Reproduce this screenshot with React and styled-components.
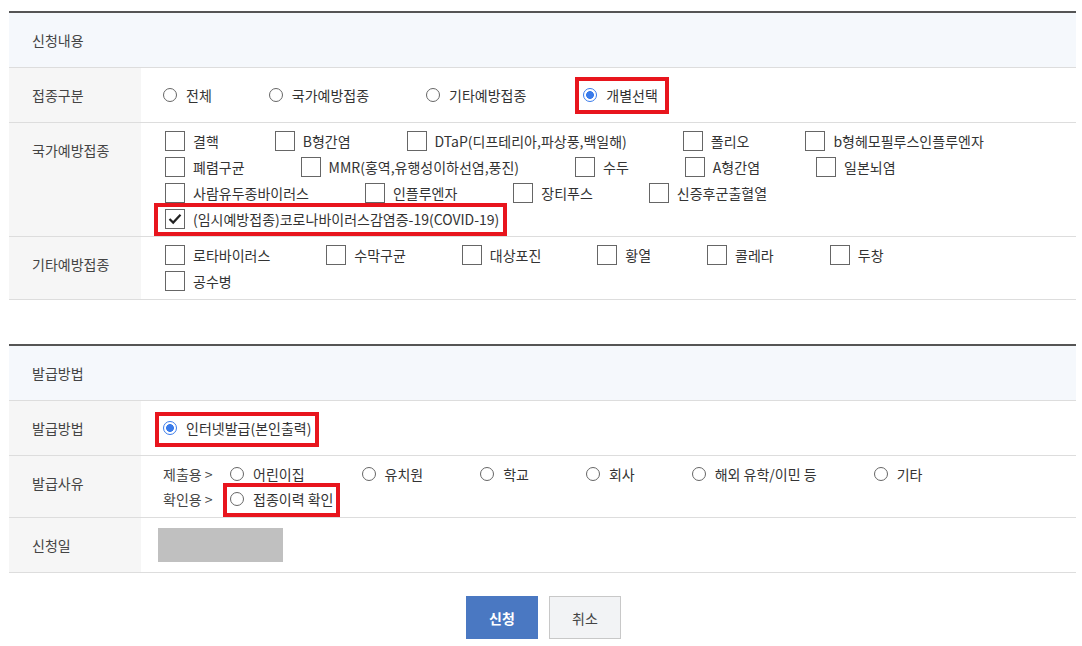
import React from "react";
import styled, { createGlobalStyle } from "styled-components";

const GlobalStyle = createGlobalStyle`
  body {
    margin: 0;
    background: #ffffff;
    font-family: "Noto Sans CJK KR", "Noto Sans", sans-serif;
    font-size: 14px;
    color: #333333;
  }
`;

const nationalRows = [
  ["결핵", "B형간염", "DTaP(디프테리아,파상풍,백일해)", "폴리오", "b형헤모필루스인플루엔자"],
  ["폐렴구균", "MMR(홍역,유행성이하선염,풍진)", "수두", "A형간염", "일본뇌염"],
  ["사람유두종바이러스", "인플루엔자", "장티푸스", "신증후군출혈열"],
];

const otherRows = [["로타바이러스", "수막구균", "대상포진", "황열", "콜레라", "두창"], ["공수병"]];

const reasons = ["어린이집", "유치원", "학교", "회사", "해외 유학/이민 등", "기타"];

const CheckBox = ({ checked, label }) => (
  <CheckItem>
    <Box>
      {checked && (
        <svg width="14" height="12" viewBox="0 0 14 12">
          <polyline points="1.5,6 5.2,9.6 12.5,1.8" fill="none" stroke="#222" strokeWidth="2.2" />
        </svg>
      )}
    </Box>
    <span>{label}</span>
  </CheckItem>
);

const Radio = ({ checked, label }) => (
  <RadioItem>
    <Circle $checked={checked} />
    <span>{label}</span>
  </RadioItem>
);

const App = () => {
  return (
    <>
      <GlobalStyle />
      <Page>
        <Section>
          <HeadRow>신청내용</HeadRow>
          <Row>
            <Label>접종구분</Label>
            <Cell>
              <Line>
                <Radio label="전체" />
                <Radio label="국가예방접종" />
                <Radio label="기타예방접종" />
                <Highlight $t={6} $r={11} $b={6} $l={8}>
                  <Radio checked label="개별선택" />
                </Highlight>
              </Line>
            </Cell>
          </Row>
          <Row>
            <Label>국가예방접종</Label>
            <Cell $pad="5px 0 4px 22px">
              {nationalRows.map((row, i) => (
                <Line key={i} $gap={54}>
                  {row.map((name) => (
                    <CheckBox key={name} label={name} />
                  ))}
                </Line>
              ))}
              <Line $gap={54}>
                <Highlight $t={3} $r={8} $b={4} $l={9}>
                  <CheckBox checked label="(임시예방접종)코로나바이러스감염증-19(COVID-19)" />
                </Highlight>
              </Line>
            </Cell>
          </Row>
          <Row>
            <Label>기타예방접종</Label>
            <Cell>
              {otherRows.map((row, i) => (
                <Line key={i} $gap={54}>
                  {row.map((name) => (
                    <CheckBox key={name} label={name} />
                  ))}
                </Line>
              ))}
            </Cell>
          </Row>
        </Section>

        <Section>
          <HeadRow>발급방법</HeadRow>
          <Row>
            <Label>발급방법</Label>
            <Cell>
              <Line>
                <Highlight $t={4} $r={8} $b={6} $l={8}>
                  <Radio checked label="인터넷발급(본인출력)" />
                </Highlight>
              </Line>
            </Cell>
          </Row>
          <Row>
            <Label>발급사유</Label>
            <Cell $pad="5px 0 6px 22px">
              <ReasonLine>
                <Prefix>제출용 &gt;</Prefix>
                <Line $h={25}>
                  {reasons.map((r) => (
                    <Radio key={r} label={r} />
                  ))}
                </Line>
              </ReasonLine>
              <ReasonLine>
                <Prefix>확인용 &gt;</Prefix>
                <Highlight $t={3} $r={7} $b={6} $l={7}>
                  <Radio label="접종이력 확인" />
                </Highlight>
              </ReasonLine>
            </Cell>
          </Row>
          <Row>
            <Label>신청일</Label>
            <Cell>
              <DateBox />
            </Cell>
          </Row>
        </Section>

        <Buttons>
          <Button $primary>신청</Button>
          <Button>취소</Button>
        </Buttons>
      </Page>
    </>
  );
};

export default App;

const Page = styled.div`
  padding: 11px 6px 0 9px;
`;

const Section = styled.div`
  border-top: 2px solid #555555;
  margin-bottom: 44px;

  & + & {
    margin-bottom: 23px;
  }
`;

const HeadRow = styled.div`
  height: 54px;
  display: flex;
  align-items: center;
  padding-left: 23px;
  background-color: #f5f8fc;
  border-bottom: 1px solid #dddddd;
  color: #444444;
`;

const Row = styled.div`
  display: flex;
  border-bottom: 1px solid #dddddd;
`;

const Label = styled.div`
  width: 132px;
  min-height: 54px;
  flex-shrink: 0;
  box-sizing: border-box;
  padding: 16px 0 0 23px;
  line-height: 22px;
  background-color: #f6f6f6;
  color: #444444;
`;

const Cell = styled.div`
  flex: 1;
  display: flex;
  flex-direction: column;
  justify-content: center;
  padding: ${(p) => p.$pad || "5px 0 5px 22px"};
`;

const Line = styled.div`
  display: flex;
  flex-wrap: wrap;
  align-items: center;
  column-gap: ${(p) => p.$gap || 57}px;
  min-height: ${(p) => p.$h || 26}px;
`;

const ReasonLine = styled.div`
  display: flex;
  align-items: center;
  min-height: 25px;
`;

const Prefix = styled.span`
  width: 67px;
  flex-shrink: 0;
  color: #444444;
  white-space: nowrap;
`;

const CheckItem = styled.label`
  display: inline-flex;
  align-items: center;
  gap: 8px;
  height: 26px;
  margin-left: 2px;
  line-height: 20px;
  white-space: nowrap;
`;

const Box = styled.span`
  width: 20px;
  height: 20px;
  box-sizing: border-box;
  border: 1px solid #666666;
  background: #ffffff;
  display: flex;
  align-items: center;
  justify-content: center;
`;

const RadioItem = styled.label`
  display: inline-flex;
  align-items: center;
  gap: 9px;
  height: 25px;
  line-height: 20px;
  white-space: nowrap;
`;

const Circle = styled.span`
  width: 14px;
  height: 14px;
  box-sizing: border-box;
  border-radius: 50%;
  border: 1px solid ${(p) => (p.$checked ? "#3a7bea" : "#666666")};
  background: ${(p) =>
    p.$checked ? "radial-gradient(circle, #3a7bea 0 3.6px, #ffffff 4.2px)" : "#ffffff"};
`;

const Highlight = styled.span`
  position: relative;
  display: inline-flex;

  &::after {
    content: "";
    position: absolute;
    top: -${(p) => p.$t}px;
    right: -${(p) => p.$r}px;
    bottom: -${(p) => p.$b}px;
    left: -${(p) => p.$l}px;
    border: 4px solid #e8151d;
    pointer-events: none;
  }
`;

const DateBox = styled.div`
  width: 125px;
  height: 34px;
  margin-left: -5px;
  background-color: #c0c0c0;
`;

const Buttons = styled.div`
  display: flex;
  justify-content: center;
  gap: 11px;
  padding-left: 2px;
`;

const Button = styled.button`
  width: 72px;
  height: 43px;
  box-sizing: border-box;
  font-family: inherit;
  font-size: 14px;
  font-weight: ${(p) => (p.$primary ? 700 : 400)};
  color: ${(p) => (p.$primary ? "#ffffff" : "#444444")};
  background-color: ${(p) => (p.$primary ? "#4a78c2" : "#f2f3f5")};
  border: 1px solid ${(p) => (p.$primary ? "#4a78c2" : "#c8c8c8")};
  cursor: pointer;
`;
